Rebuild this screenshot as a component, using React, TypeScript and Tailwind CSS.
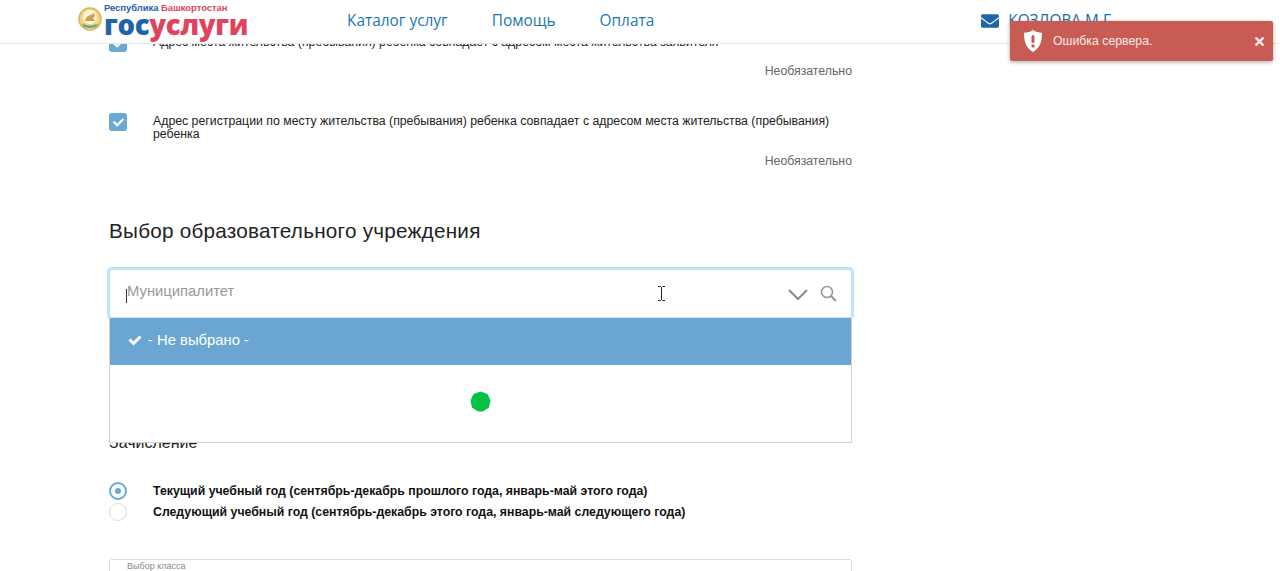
import { FaCheck, FaEnvelope, FaTimes } from 'react-icons/fa';

function CheckRow({ text, noteClass }: { text: string; noteClass: string }) {
    return (
        <div>
            <div className="flex items-start">
                <div className="w-[18px] h-[18px] shrink-0 rounded-[3px] bg-[#6aa9d3] flex items-center justify-center text-white">
                    <FaCheck className="w-[11px] h-[11px]" />
                </div>
                <p className="ml-[26px] mt-[2px] text-[12.3px] leading-[13px] text-[#222]">{text}</p>
            </div>
            <div className={`${noteClass} text-right text-[12.3px] leading-[14px] text-[#666]`}>Необязательно</div>
        </div>
    );
}

function Logo() {
    return (
        <div className="flex items-start ml-[78px] w-[200px] h-[43px]">
            <svg width="24" height="26" viewBox="0 0 24 26" className="mt-[6px] shrink-0">
                <circle cx="12" cy="13" r="11" fill="#f0d48a" stroke="#d9b45c" strokeWidth="1.500" />
                <circle cx="12" cy="11" r="7" fill="#fff6d8" />
                <path d="M7 15c1-4 3-6 6-6l3-2 1 3-2 2 2 3z" fill="#c9a24a" />
                <path d="M4 19c3 4 13 4 16 0l-2-1c-3 2-9 2-12 0z" fill="#6aa57a" />
            </svg>
            <div className="ml-[2px] pt-[3px] font-bold">
                <div className="text-[9.4px] leading-[10px] whitespace-nowrap">
                    <span className="text-[#1f63a8]">Республика </span>
                    <span className="text-[#e0445c]">Башкортостан</span>
                </div>
                <div className="text-[27.5px] leading-[24px] whitespace-nowrap font-['Open_Sans',sans-serif] font-extrabold tracking-[-0.3px]">
                    <span className="text-[#1f63a8]">гос</span>
                    <span className="text-[#e0445c]">услуги</span>
                </div>
            </div>
        </div>
    );
}

export default function App() {
    return (
        <div className="relative h-[571px] overflow-hidden bg-white font-['Liberation_Sans',sans-serif]">
            {/* Шапка поверх прокрученной страницы */}
            <header className="absolute top-0 left-0 right-0 z-20 h-[44px] bg-white border-b border-[#e8e8e8] flex items-start">
                <Logo />
                <nav className="ml-[69px] flex gap-[44px] pt-[12px] text-[15.4px] leading-[18px] text-[#1b78b3] font-['Open_Sans',sans-serif]">
                    <span>Каталог услуг</span>
                    <span>Помощь</span>
                    <span>Оплата</span>
                </nav>
                <div className="ml-auto mr-[165px] pt-[12px] flex items-center text-[15.4px] leading-[18px] text-[#1b6fa8] font-['Open_Sans',sans-serif]">
                    <FaEnvelope className="w-[20px] h-[18px] mr-[8px] text-[#1f66a8]" />
                    <span>КОЗЛОВА М.Г.</span>
                </div>
            </header>

            {/* Уведомление */}
            <div className="absolute z-30 left-[1010px] top-[21px] w-[263px] h-[40px] rounded-[2px] bg-[#c85c54] shadow-[0_1px_4px_rgba(0,0,0,0.35)] flex items-center text-white">
                <svg width="18" height="22" viewBox="0 0 18 22" className="ml-[14px] shrink-0">
                    <path d="M9 0c2 1.600 5 2.600 9 2.800 0 8-1.500 15-9 19.200C1.500 17.800 0 10.800 0 2.800 4 2.600 7 1.600 9 0z" fill="#fff" />
                    <rect x="7.500" y="5" width="3" height="8" rx="1.500" fill="#c85c54" />
                    <circle cx="9" cy="16" r="1.700" fill="#c85c54" />
                </svg>
                <span className="ml-[11px] text-[12.3px] leading-[16px] text-[#fbe9e7]">Ошибка сервера.</span>
                <FaTimes className="ml-auto mr-[7px] w-[13px] h-[13px] text-[#fbe9e7]" />
            </div>

            {/* Форма */}
            <main className="ml-[109px] w-[743px] pt-[34px]">
                <CheckRow
                    noteClass="mt-[12px]"
                    text="Адрес места жительства (пребывания) ребенка совпадает с адресом места жительства заявителя"
                />
                <div className="mt-[35px]">
                    <CheckRow
                        noteClass="mt-[13px]"
                        text="Адрес регистрации по месту жительства (пребывания) ребенка совпадает с адресом места жительства (пребывания) ребенка"
                    />
                </div>

                <h2 className="mt-[51px] text-[20.7px] leading-[24px] text-[#222] tracking-[0.24px]">Выбор образовательного учреждения</h2>

                <div className="relative mt-[26px]">
                    <div className="h-[49px] rounded-[3px] border border-[#bfe3f8] ring-2 ring-[#bfe3f8] bg-white flex items-center pl-[16px] pr-[14px]">
                        <span className="w-px h-[14px] bg-[#333] mt-[5px]" />
                        <span className="-mt-[6px] text-[14.8px] leading-[18px] text-[#999]">Муниципалитет</span>
                        <svg width="20" height="12" viewBox="0 0 20 12" className="ml-auto mt-[3px]" fill="none" stroke="#8a8a8a" strokeWidth="2">
                            <path d="M1 1l9 9 9-9" />
                        </svg>
                        <svg width="17" height="17" viewBox="0 0 17 17" className="ml-[12px]" fill="none" stroke="#9a9a9a" strokeWidth="1.600">
                            <circle cx="7" cy="7" r="5.500" />
                            <path d="M11 11l5 5" strokeWidth="2.200" />
                        </svg>
                    </div>
                    {/* Текстовый курсор мыши */}
                    <svg width="9" height="15" viewBox="0 0 9 15" className="absolute left-[548px] top-[17px]" fill="none" stroke="#222" strokeWidth="1">
                        <path d="M1 .5h2.500L4.500 1.500 5.500.5H8M4.500 1.500v12M1 14.500h2.500l1-1 1 1H8" />
                    </svg>
                    {/* Выпадающий список */}
                    <div className="absolute z-10 left-0 right-0 top-[49px] h-[125px] bg-white border border-t-0 border-[#d0d0d0]">
                        <div className="h-[47px] bg-[#6aa6d1] flex items-center pl-[18px] pb-[3px] text-white text-[14.8px]">
                            <svg width="14" height="11" viewBox="0 0 14 11" className="mr-[6px]" fill="none" stroke="#fff" strokeWidth="3">
                                <path d="M1.500 4.500l4 4 7-7" />
                            </svg>
                            <span>- Не выбрано -</span>
                        </div>
                        <div className="h-[77px] flex items-center justify-center">
                            <svg width="21" height="21" viewBox="0 0 21 21" className="mb-[4px] mr-[1px]">
                                <path d="M10.500 0.500l7 2.500 3 6.500-1.500 7-6 4h-5l-6-4-1.500-7 3-6.500z" fill="#05c246" />
                            </svg>
                        </div>
                    </div>
                </div>

                <h2 className="mt-[115px] text-[16px] leading-[20px] text-[#222]">Зачисление</h2>

                <div className="mt-[29px] flex flex-col gap-[3px] font-bold text-[12.3px] leading-[18px] text-[#111]">
                    <label className="flex items-center">
                        <span className="w-[18px] h-[18px] rounded-full border-2 border-[#6aa9d3] flex items-center justify-center shrink-0">
                            <span className="w-[6px] h-[6px] rounded-full bg-[#6aa9d3]" />
                        </span>
                        <span className="ml-[26px]">Текущий учебный год (сентябрь-декабрь прошлого года, январь-май этого года)</span>
                    </label>
                    <label className="flex items-center">
                        <span className="w-[18px] h-[18px] rounded-full border border-[#ddd] shrink-0" />
                        <span className="ml-[26px]">Следующий учебный год (сентябрь-декабрь этого года, январь-май следующего года)</span>
                    </label>
                </div>

                <div className="mt-[38px] h-[50px] rounded-[3px] border border-[#ddd] pl-[17px] pt-[1px] text-[9px] leading-[11px] text-[#888]">
                    Выбор класса
                </div>
            </main>
        </div>
    );
}
